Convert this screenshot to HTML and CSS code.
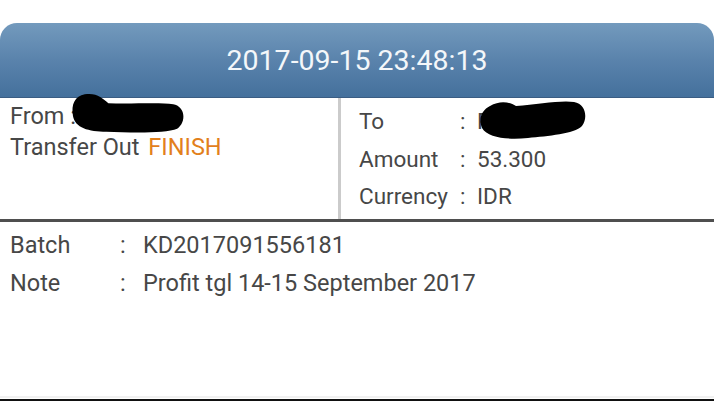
FILE: index.html
```html
<!DOCTYPE html>
<html>
<head>
<meta charset="utf-8">
<link rel="stylesheet" href="styles.css">
</head>
<body>
<div class="page">
  <div class="header"><span class="stamp">2017-09-15 23:48:13</span></div>
  <div class="mid">
    <div class="left">
      <div class="line">From : <span class="hidden">R</span></div>
      <div class="line">Transfer Out <span class="status">FINISH</span></div>
      <svg class="blob blob-from" width="116" height="44" viewBox="0 0 118 44">
        <path d="M14 2 C26 0 32 6 38 11 C60 12 90 10 104 12 C116 14 118 30 108 37 C96 42 60 41 36 40 C18 40 4 36 2 24 C0 12 4 4 14 2 Z" fill="#000"/>
      </svg>
    </div>
    <div class="right">
      <div class="row"><span class="k">To</span><span class="c">:</span><span class="v">R</span></div>
      <div class="row"><span class="k">Amount</span><span class="c">:</span><span class="v">53.300</span></div>
      <div class="row"><span class="k">Currency</span><span class="c">:</span><span class="v">IDR</span></div>
      <svg class="blob blob-to" width="110" height="40" viewBox="0 0 110 40">
        <path d="M12 6 C22 0 32 2 38 6 C60 4 84 0 96 2 C108 4 110 18 104 26 C96 34 70 36 50 38 C30 40 10 38 4 28 C0 18 4 10 12 6 Z" fill="#000"/>
      </svg>
    </div>
  </div>
  <div class="bottom">
    <div class="brow"><span class="k">Batch</span><span class="c">:</span><span class="v">KD2017091556181</span></div>
    <div class="brow"><span class="k">Note</span><span class="c">:</span><span class="v">Profit tgl 14-15 September 2017</span></div>
  </div>
  <div class="foot"></div>
</div>
</body>
</html>
```
FILE: styles.css
```css
html, body {
  margin: 0;
  padding: 0;
  background: #ffffff;
}
.page {
  width: 714px;
  height: 411px;
  padding-top: 23px;
  box-sizing: border-box;
  font-family: Roboto, "Liberation Sans", sans-serif;
  color: #474747;
  overflow: hidden;
}
.header {
  height: 74px;
  border-radius: 17px 17px 0 0;
  background: linear-gradient(to bottom, #739abd 0%, #5a83ac 50%, #44709c 100%);
  border-bottom: 1px solid #3a5d83;
  display: flex;
  align-items: center;
  justify-content: center;
}
.stamp {
  color: #f4f7fa;
  font-size: 28.5px;
  padding-top: 1px;
}
.mid {
  display: flex;
  height: 121px;
  border-bottom: 3px solid #4f4f4f;
}
.left {
  position: relative;
  width: 328px;
  padding: 3px 0 0 10px;
  border-right: 3px solid #cbcbcb;
  font-size: 23.5px;
}
.line {
  height: 31px;
  line-height: 31px;
}
.hidden {
  color: #474747;
}
.status {
  color: #e2801c;
  margin-left: 3px;
}
.blob {
  position: absolute;
}
.blob-from {
  left: 71px;
  top: -6px;
}
.right {
  position: relative;
  flex: 1;
  padding: 5px 0 0 18px;
  font-size: 22.5px;
}
.row {
  display: grid;
  grid-template-columns: 101px 17px auto;
  height: 37.5px;
  line-height: 37.5px;
}
.blob-to {
  left: 137px;
  top: 2px;
}
.bottom {
  padding: 4px 0 0 10px;
  height: 176px;
  box-sizing: border-box;
  font-size: 23.5px;
  border-bottom: 2px solid #f1f1f1;
}
.brow {
  display: grid;
  grid-template-columns: 110px 23px auto;
  height: 38px;
  line-height: 38px;
}
.foot {
  margin-top: 1px;
  border-top: 2px solid #111111;
}
```
